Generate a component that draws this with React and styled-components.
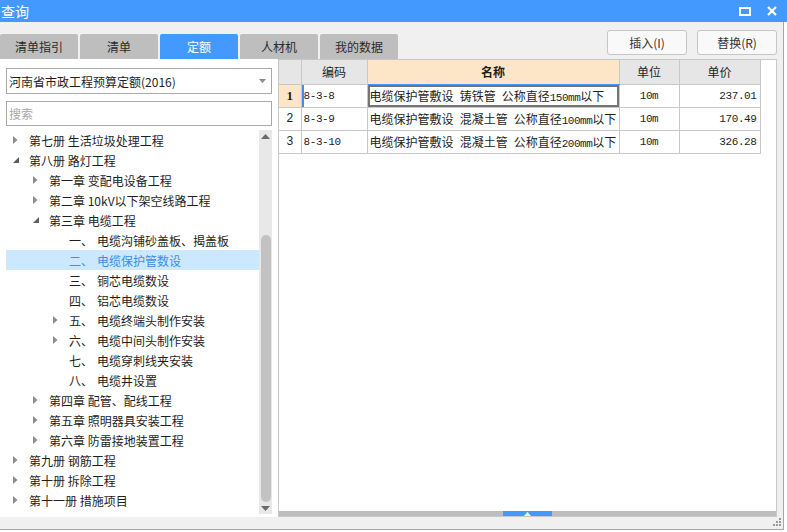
import React from 'react'
import styled, {createGlobalStyle} from 'styled-components'

const GlobalStyle = createGlobalStyle`
  html, body {
    margin: 0;
    padding: 0;
    background: #ffffff;
    font-family: "Noto Sans CJK SC", "Liberation Sans", sans-serif;
  }
  * { box-sizing: border-box; }
`

const tabs = ['清单指引', '清单', '定额', '人材机', '我的数据']

const tree = [
  {level: 0, state: 'closed', text: '第七册 生活垃圾处理工程'},
  {level: 0, state: 'open', text: '第八册 路灯工程'},
  {level: 1, state: 'closed', text: '第一章 变配电设备工程'},
  {level: 1, state: 'closed', text: '第二章 10kV以下架空线路工程'},
  {level: 1, state: 'open', text: '第三章 电缆工程'},
  {level: 2, num: '一、', text: '电缆沟铺砂盖板、揭盖板'},
  {level: 2, num: '二、', text: '电缆保护管数设', selected: true},
  {level: 2, num: '三、', text: '铜芯电缆数设'},
  {level: 2, num: '四、', text: '铝芯电缆数设'},
  {level: 2, num: '五、', text: '电缆终端头制作安装', state: 'closed'},
  {level: 2, num: '六、', text: '电缆中间头制作安装', state: 'closed'},
  {level: 2, num: '七、', text: '电缆穿刺线夹安装'},
  {level: 2, num: '八、', text: '电缆井设置'},
  {level: 1, state: 'closed', text: '第四章 配管、配线工程'},
  {level: 1, state: 'closed', text: '第五章 照明器具安装工程'},
  {level: 1, state: 'closed', text: '第六章 防雷接地装置工程'},
  {level: 0, state: 'closed', text: '第九册 钢筋工程'},
  {level: 0, state: 'closed', text: '第十册 拆除工程'},
  {level: 0, state: 'closed', text: '第十一册 措施项目'},
]

const rows = [
  {code: '8-3-8', name: '电缆保护管敷设 铸铁管 公称直径150mm以下', unit: '10m', price: '237.01'},
  {code: '8-3-9', name: '电缆保护管敷设 混凝土管 公称直径100mm以下', unit: '10m', price: '170.49'},
  {code: '8-3-10', name: '电缆保护管敷设 混凝土管 公称直径200mm以下', unit: '10m', price: '326.28'},
]

// split ascii runs so they get the narrow grid font
const splitName = (s) => s.split(/([\x20-\x7e]+)/).filter(Boolean)

function App() {
  return (
    <>
      <GlobalStyle />
      <Window>
        <TitleBar>
          <Title>查询</Title>
          <Controls>
            <svg width="12" height="9" viewBox="0 0 12 9">
              <rect x="1" y="1" width="10" height="7" fill="none" stroke="#fff" strokeWidth="2" />
            </svg>
            <svg width="10" height="10" viewBox="0 0 10 10">
              <path d="M1 1 L9 9 M9 1 L1 9" stroke="#fff" strokeWidth="2.2" />
            </svg>
          </Controls>
        </TitleBar>
        <Content>
          <Toolbar>
            <Tabs>
              {tabs.map((t) => (
                <Tab key={t} active={t === '定额'}>{t}</Tab>
              ))}
            </Tabs>
            <Buttons>
              <Button>插入(I)</Button>
              <Button>替换(R)</Button>
            </Buttons>
          </Toolbar>
          <Body>
            <LeftPanel>
              <Select>
                <span>河南省市政工程预算定额(2016)</span>
                <svg width="7" height="4" viewBox="0 0 7 4"><path d="M0 0 H7 L3.5 4 Z" fill="#8a8a8a" /></svg>
              </Select>
              <Search placeholder="搜索" />
              <TreeArea>
                <TreeList>
                  {tree.map((item, i) => (
                    <TreeRow key={i} level={item.level} selected={item.selected}>
                      <Toggle>
                        {item.state === 'closed' && (
                          <svg width="5" height="8" viewBox="0 0 5 8"><path d="M0 0 L4.5 4 L0 8 Z" fill="#8c8c8c" /></svg>
                        )}
                        {item.state === 'open' && (
                          <svg width="6" height="6" viewBox="0 0 6 6"><path d="M6 0 V6 H0 Z" fill="#5e5e5e" /></svg>
                        )}
                      </Toggle>
                      {item.num && <Num>{item.num}</Num>}
                      <Label>{item.text}</Label>
                    </TreeRow>
                  ))}
                </TreeList>
                <VScroll>
                  <ScrollArrow>
                    <svg width="9" height="5" viewBox="0 0 9 5"><path d="M0 5 L4.5 0 L9 5 Z" fill="#6a6a6a" /></svg>
                  </ScrollArrow>
                  <ScrollGap />
                  <Thumb />
                  <ScrollArrow>
                    <svg width="9" height="5" viewBox="0 0 9 5"><path d="M0 0 L4.5 5 L9 0 Z" fill="#6a6a6a" /></svg>
                  </ScrollArrow>
                </VScroll>
              </TreeArea>
            </LeftPanel>
            <GridPanel>
              <GridScroll>
                <Table>
                  <colgroup>
                    <col style={{width: 22}} />
                    <col style={{width: 66}} />
                    <col style={{width: 252}} />
                    <col style={{width: 60}} />
                    <col style={{width: 81}} />
                  </colgroup>
                  <thead>
                    <tr>
                      <Th />
                      <Th>编码</Th>
                      <Th current>名称</Th>
                      <Th>单位</Th>
                      <Th>单价</Th>
                    </tr>
                  </thead>
                  <tbody>
                    {rows.map((r, i) => (
                      <tr key={r.code}>
                        <RowHead current={i === 0}>{i + 1}</RowHead>
                        <CodeCell current={i === 0}>{r.code}</CodeCell>
                        <NameCell current={i === 0}>
                          {splitName(r.name).map((part, j) =>
                            /^[\x20-\x7e]+$/.test(part) ? <Latin key={j}>{part}</Latin> : <span key={j}>{part}</span>
                          )}
                        </NameCell>
                        <UnitCell>{r.unit}</UnitCell>
                        <PriceCell>{r.price}</PriceCell>
                      </tr>
                    ))}
                  </tbody>
                </Table>
              </GridScroll>
              <Splitter>
                <SplitHandle>
                  <svg width="7" height="4" viewBox="0 0 7 4"><path d="M0 4 L3.5 0 L7 4 Z" fill="#fff" /></svg>
                </SplitHandle>
              </Splitter>
            </GridPanel>
          </Body>
          <Footer>
            <svg width="9" height="9" viewBox="0 0 9 9">
              <rect x="6" y="0" width="2" height="2" fill="#9a9a9a" />
              <rect x="3" y="3" width="2" height="2" fill="#9a9a9a" />
              <rect x="6" y="3" width="2" height="2" fill="#9a9a9a" />
              <rect x="0" y="6" width="2" height="2" fill="#9a9a9a" />
              <rect x="3" y="6" width="2" height="2" fill="#9a9a9a" />
              <rect x="6" y="6" width="2" height="2" fill="#9a9a9a" />
            </svg>
          </Footer>
        </Content>
      </Window>
    </>
  )
}

const Window = styled.div`
  width: 787px;
  height: 532px;
  display: flex;
  flex-direction: column;
  overflow: hidden;
`

const TitleBar = styled.div`
  height: 22px;
  flex: none;
  background: #4499ff;
  display: flex;
  align-items: center;
  justify-content: space-between;
`

const Title = styled.div`
  color: #ffffff;
  font-size: 14px;
  padding-left: 1px;
  line-height: 22px;
`

const Controls = styled.div`
  display: flex;
  align-items: center;
  gap: 16px;
  padding-right: 10px;
  svg { display: block; }
`

const Content = styled.div`
  width: 784px;
  height: 508px;
  flex: none;
  background: #f0f0f0;
  border-right: 1px solid #a6a6a6;
  border-bottom: 1px solid #a6a6a6;
  display: flex;
  flex-direction: column;
`

const Toolbar = styled.div`
  height: 37px;
  flex: none;
  display: flex;
  justify-content: space-between;
  align-items: flex-end;
`

const Tabs = styled.div`
  display: flex;
  gap: 2px;
`

const Tab = styled.div`
  width: 78px;
  height: 25px;
  display: flex;
  align-items: center;
  justify-content: center;
  font-size: 12px;
  border-radius: 2px 2px 0 0;
  background: ${(p) => (p.active ? '#4499ff' : '#bebebe')};
  color: ${(p) => (p.active ? '#ffffff' : '#2a2a2a')};
`

const Buttons = styled.div`
  align-self: flex-start;
  margin-top: 8px;
  margin-right: 6px;
  display: flex;
  gap: 10px;
`

const Button = styled.div`
  width: 80px;
  height: 25px;
  display: flex;
  align-items: center;
  justify-content: center;
  font-size: 12px;
  color: #333;
  background: #f9f9f9;
  border: 1px solid #c6c6c6;
  border-radius: 3px;
`

const Body = styled.div`
  height: 458px;
  flex: none;
  display: flex;
  margin-right: 6px;
`

const LeftPanel = styled.div`
  width: 278px;
  flex: none;
  background: #ffffff;
  display: flex;
  flex-direction: column;
  padding: 9px 6px 3px 6px;
`

const Select = styled.div`
  height: 26px;
  flex: none;
  border: 1px solid #a9a9a9;
  display: flex;
  align-items: center;
  justify-content: space-between;
  padding: 0 5px 0 2px;
  font-size: 12px;
  color: #1e1e1e;
`

const Search = styled.input`
  height: 25px;
  flex: none;
  margin-top: 7px;
  border: 1px solid #a9a9a9;
  padding: 0 2px;
  font-family: "Noto Sans CJK SC", sans-serif;
  font-size: 12px;
  outline: none;
  &::placeholder { color: #a8a8a8; }
`

const TreeArea = styled.div`
  flex: 1;
  margin-top: 4px;
  display: flex;
  min-height: 0;
`

const TreeList = styled.div`
  flex: 1;
  overflow: hidden;
`

const TreeRow = styled.div`
  height: 20px;
  display: flex;
  align-items: center;
  padding-left: ${(p) => p.level * 20}px;
  font-size: 12px;
  white-space: nowrap;
  background: ${(p) => (p.selected ? '#cce8ff' : 'transparent')};
  color: ${(p) => (p.selected ? '#3b8de6' : '#1e1e1e')};
`

const Toggle = styled.div`
  width: 23px;
  flex: none;
  display: flex;
  align-items: center;
  padding-left: 7px;
  svg { display: block; }
`

const Num = styled.span`
  width: 28px;
  flex: none;
`

const Label = styled.span``

const VScroll = styled.div`
  width: 13px;
  flex: none;
  background: #e8e8e8;
  display: flex;
  flex-direction: column;
  align-items: center;
`

const ScrollArrow = styled.div`
  height: 12px;
  flex: none;
  display: flex;
  align-items: center;
  justify-content: center;
  svg { display: block; }
`

const ScrollGap = styled.div`
  height: 93px;
  flex: none;
`

const Thumb = styled.div`
  width: 10px;
  flex: 1;
  background: #c2c2c2;
  border-radius: 5px;
`

const GridPanel = styled.div`
  flex: 1;
  background: #ffffff;
  border: 1px solid #c8c8c8;
  display: flex;
  flex-direction: column;
`

const GridScroll = styled.div`
  flex: 1;
  overflow: hidden;
`

const Table = styled.table`
  border-collapse: collapse;
  table-layout: fixed;
  width: 481px;
  font-size: 12px;
  color: #1e1e1e;
  td, th {
    border: 1px solid #c8c8c8;
    padding: 0;
    overflow: hidden;
    white-space: nowrap;
  }
  tr:first-child th { border-top: none; }
  tr td:first-child, tr th:first-child { border-left: none; }
`

const Th = styled.th`
  height: 24px;
  font-weight: ${(p) => (p.current ? 700 : 400)};
  background: ${(p) => (p.current ? '#fde5c8' : '#e6e6e6')};
  border-bottom: 1px solid ${(p) => (p.current ? '#4499ff' : '#c8c8c8')} !important;
  color: #1e1e1e;
`

const RowHead = styled.td`
  height: 23px;
  text-align: center;
  background: ${(p) => (p.current ? '#fde5c8' : '#ffffff')};
  font-family: ${(p) => (p.current ? '"Liberation Serif", serif' : '"Liberation Mono", monospace')};
  font-weight: ${(p) => (p.current ? 700 : 400)};
  font-size: ${(p) => (p.current ? '13px' : '12px')};
`

const CodeCell = styled.td`
  font-family: "Liberation Mono", monospace;
  font-size: 11px;
  letter-spacing: -0.4px;
  padding-left: 2px !important;
  box-shadow: ${(p) => (p.current ? 'inset 2px 0 0 #3d8ff5' : 'none')};
`

const NameCell = styled.td`
  padding-left: 2px !important;
  box-shadow: ${(p) => (p.current ? 'inset 0 0 0 2px #747474' : 'none')};
`

const Latin = styled.span`
  font-family: "Liberation Mono", monospace;
  font-size: 11px;
  letter-spacing: -0.5px;
  white-space: pre;
`

const UnitCell = styled.td`
  text-align: center;
  font-family: "Liberation Mono", monospace;
  font-size: 11px;
  letter-spacing: -0.4px;
`

const PriceCell = styled.td`
  text-align: right;
  font-family: "Liberation Mono", monospace;
  font-size: 11px;
  letter-spacing: -0.4px;
  padding-right: 3px !important;
`

const Splitter = styled.div`
  height: 5px;
  flex: none;
  background: #bdbdbd;
  display: flex;
  justify-content: center;
`

const SplitHandle = styled.div`
  width: 49px;
  background: #4499ff;
  display: flex;
  align-items: center;
  justify-content: center;
  svg { display: block; }
`

const Footer = styled.div`
  flex: 1;
  display: flex;
  justify-content: flex-end;
  align-items: flex-start;
  padding: 1px 1px 0 0;
  svg { display: block; }
`

export default App
